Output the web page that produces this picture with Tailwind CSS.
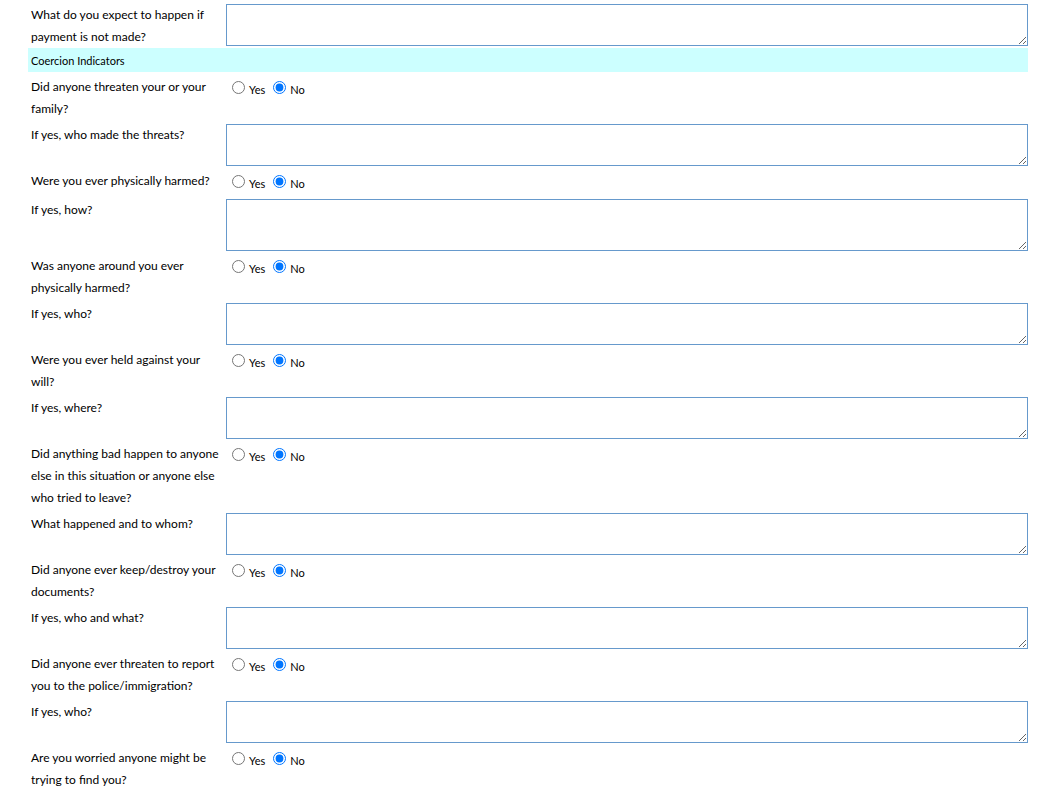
<!DOCTYPE html>
<html lang="en">
<head>
<meta charset="utf-8">
<meta name="viewport" content="width=device-width, initial-scale=1">
<title>Coercion Indicators</title>
<script src="https://cdn.jsdelivr.net/npm/@tailwindcss/browser@4"></script>
</head>
<body class="h-screen overflow-hidden bg-white font-['Lato',sans-serif] text-[12px] leading-[22px] text-black">
<form class="pl-7 pr-[30px]">
  <div class="grid grid-cols-[198px_1fr] items-start pt-1">
    <label for="expect" class="pl-[3px] pr-1">What do you expect to happen if payment is not made?</label>
    <textarea id="expect" class="block h-[42px] w-full border border-[#6699cc]"></textarea>
  </div>
  <h2 class="bg-[#ccffff] pt-0.5 pl-[3px] text-[11px] leading-[22px]">Coercion Indicators</h2>
  <div class="grid grid-cols-[198px_1fr] items-start pt-1" role="radiogroup" aria-labelledby="q1">
    <div id="q1" class="pl-[3px] pr-1">Did anyone threaten your or your family?</div>
    <div class="flex h-[25px] gap-2 pl-1.5 text-[11px]">
      <label class="flex items-start gap-1"><input type="radio" name="threat" class="mt-[5px] size-[13px]"><span class="pt-[3px]">Yes</span></label>
      <label class="flex items-start gap-1"><input type="radio" name="threat" checked class="mt-[5px] size-[13px]"><span class="pt-[3px]">No</span></label>
    </div>
  </div>
  <div class="grid grid-cols-[198px_1fr] items-start pt-1">
    <label for="threatwho" class="pl-[3px] pr-1">If yes, who made the threats?</label>
    <textarea id="threatwho" class="block h-[42px] w-full border border-[#6699cc]"></textarea>
  </div>
  <div class="grid grid-cols-[198px_1fr] items-start pt-1" role="radiogroup" aria-labelledby="q2">
    <div id="q2" class="pl-[3px] pr-1">Were you ever physically harmed?</div>
    <div class="flex h-[25px] gap-2 pl-1.5 text-[11px]">
      <label class="flex items-start gap-1"><input type="radio" name="harmed" class="mt-[5px] size-[13px]"><span class="pt-[3px]">Yes</span></label>
      <label class="flex items-start gap-1"><input type="radio" name="harmed" checked class="mt-[5px] size-[13px]"><span class="pt-[3px]">No</span></label>
    </div>
  </div>
  <div class="grid grid-cols-[198px_1fr] items-start pt-1">
    <label for="harmedhow" class="pl-[3px] pr-1">If yes, how?</label>
    <textarea id="harmedhow" class="block h-[52px] w-full border border-[#6699cc]"></textarea>
  </div>
  <div class="grid grid-cols-[198px_1fr] items-start pt-1" role="radiogroup" aria-labelledby="q3">
    <div id="q3" class="pl-[3px] pr-1">Was anyone around you ever physically harmed?</div>
    <div class="flex h-[25px] gap-2 pl-1.5 text-[11px]">
      <label class="flex items-start gap-1"><input type="radio" name="around" class="mt-[5px] size-[13px]"><span class="pt-[3px]">Yes</span></label>
      <label class="flex items-start gap-1"><input type="radio" name="around" checked class="mt-[5px] size-[13px]"><span class="pt-[3px]">No</span></label>
    </div>
  </div>
  <div class="grid grid-cols-[198px_1fr] items-start pt-1">
    <label for="aroundwho" class="pl-[3px] pr-1">If yes, who?</label>
    <textarea id="aroundwho" class="block h-[42px] w-full border border-[#6699cc]"></textarea>
  </div>
  <div class="grid grid-cols-[198px_1fr] items-start pt-1" role="radiogroup" aria-labelledby="q4">
    <div id="q4" class="pl-[3px] pr-1">Were you ever held against your will?</div>
    <div class="flex h-[25px] gap-2 pl-1.5 text-[11px]">
      <label class="flex items-start gap-1"><input type="radio" name="held" class="mt-[5px] size-[13px]"><span class="pt-[3px]">Yes</span></label>
      <label class="flex items-start gap-1"><input type="radio" name="held" checked class="mt-[5px] size-[13px]"><span class="pt-[3px]">No</span></label>
    </div>
  </div>
  <div class="grid grid-cols-[198px_1fr] items-start pt-1">
    <label for="heldwhere" class="pl-[3px] pr-1">If yes, where?</label>
    <textarea id="heldwhere" class="block h-[42px] w-full border border-[#6699cc]"></textarea>
  </div>
  <div class="grid grid-cols-[198px_1fr] items-start pt-1" role="radiogroup" aria-labelledby="q5">
    <div id="q5" class="pl-[3px] pr-1">Did anything bad happen to anyone else in this situation or anyone else who tried to leave?</div>
    <div class="flex h-[25px] gap-2 pl-1.5 text-[11px]">
      <label class="flex items-start gap-1"><input type="radio" name="bad" class="mt-[5px] size-[13px]"><span class="pt-[3px]">Yes</span></label>
      <label class="flex items-start gap-1"><input type="radio" name="bad" checked class="mt-[5px] size-[13px]"><span class="pt-[3px]">No</span></label>
    </div>
  </div>
  <div class="grid grid-cols-[198px_1fr] items-start pt-1">
    <label for="badwhat" class="pl-[3px] pr-1">What happened and to whom?</label>
    <textarea id="badwhat" class="block h-[42px] w-full border border-[#6699cc]"></textarea>
  </div>
  <div class="grid grid-cols-[198px_1fr] items-start pt-1" role="radiogroup" aria-labelledby="q6">
    <div id="q6" class="pl-[3px] pr-1">Did anyone ever keep/destroy your documents?</div>
    <div class="flex h-[25px] gap-2 pl-1.5 text-[11px]">
      <label class="flex items-start gap-1"><input type="radio" name="docs" class="mt-[5px] size-[13px]"><span class="pt-[3px]">Yes</span></label>
      <label class="flex items-start gap-1"><input type="radio" name="docs" checked class="mt-[5px] size-[13px]"><span class="pt-[3px]">No</span></label>
    </div>
  </div>
  <div class="grid grid-cols-[198px_1fr] items-start pt-1">
    <label for="docswho" class="pl-[3px] pr-1">If yes, who and what?</label>
    <textarea id="docswho" class="block h-[42px] w-full border border-[#6699cc]"></textarea>
  </div>
  <div class="grid grid-cols-[198px_1fr] items-start pt-1" role="radiogroup" aria-labelledby="q7">
    <div id="q7" class="pl-[3px] pr-1">Did anyone ever threaten to report you to the police/immigration?</div>
    <div class="flex h-[25px] gap-2 pl-1.5 text-[11px]">
      <label class="flex items-start gap-1"><input type="radio" name="report" class="mt-[5px] size-[13px]"><span class="pt-[3px]">Yes</span></label>
      <label class="flex items-start gap-1"><input type="radio" name="report" checked class="mt-[5px] size-[13px]"><span class="pt-[3px]">No</span></label>
    </div>
  </div>
  <div class="grid grid-cols-[198px_1fr] items-start pt-1">
    <label for="reportwho" class="pl-[3px] pr-1">If yes, who?</label>
    <textarea id="reportwho" class="block h-[42px] w-full border border-[#6699cc]"></textarea>
  </div>
  <div class="grid grid-cols-[198px_1fr] items-start pt-1" role="radiogroup" aria-labelledby="q8">
    <div id="q8" class="pl-[3px] pr-1">Are you worried anyone might be trying to find you?</div>
    <div class="flex h-[25px] gap-2 pl-1.5 text-[11px]">
      <label class="flex items-start gap-1"><input type="radio" name="worried" class="mt-[5px] size-[13px]"><span class="pt-[3px]">Yes</span></label>
      <label class="flex items-start gap-1"><input type="radio" name="worried" checked class="mt-[5px] size-[13px]"><span class="pt-[3px]">No</span></label>
    </div>
  </div>
</form>
</body>
</html>
